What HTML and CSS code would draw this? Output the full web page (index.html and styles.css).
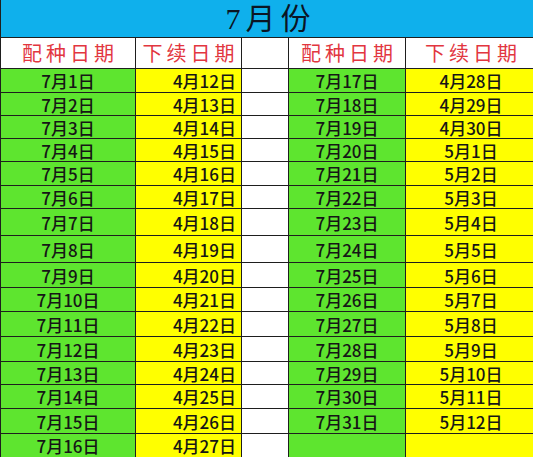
FILE: index.html
```html
<!DOCTYPE html>
<html lang="zh">
<head>
<meta charset="utf-8">
<link rel="stylesheet" href="styles.css">
</head>
<body>
<div class="sheet">
  <div class="title">7月份</div>
  <div class="cell head">配种日期</div>
  <div class="cell head">下续日期</div>
  <div class="cell blank"></div>
  <div class="cell head">配种日期</div>
  <div class="cell head">下续日期</div>

  <div class="cell green">7月1日</div><div class="cell yellow right">4月12日</div><div class="cell blank"></div><div class="cell green">7月17日</div><div class="cell yellow">4月28日</div>
  <div class="cell green">7月2日</div><div class="cell yellow right">4月13日</div><div class="cell blank"></div><div class="cell green">7月18日</div><div class="cell yellow">4月29日</div>
  <div class="cell green">7月3日</div><div class="cell yellow right">4月14日</div><div class="cell blank"></div><div class="cell green">7月19日</div><div class="cell yellow">4月30日</div>
  <div class="cell green">7月4日</div><div class="cell yellow right">4月15日</div><div class="cell blank"></div><div class="cell green">7月20日</div><div class="cell yellow">5月1日</div>
  <div class="cell green">7月5日</div><div class="cell yellow right">4月16日</div><div class="cell blank"></div><div class="cell green">7月21日</div><div class="cell yellow">5月2日</div>
  <div class="cell green">7月6日</div><div class="cell yellow right">4月17日</div><div class="cell blank"></div><div class="cell green">7月22日</div><div class="cell yellow">5月3日</div>
  <div class="cell green">7月7日</div><div class="cell yellow right">4月18日</div><div class="cell blank"></div><div class="cell green">7月23日</div><div class="cell yellow">5月4日</div>
  <div class="cell green">7月8日</div><div class="cell yellow right">4月19日</div><div class="cell blank"></div><div class="cell green">7月24日</div><div class="cell yellow">5月5日</div>
  <div class="cell green">7月9日</div><div class="cell yellow right">4月20日</div><div class="cell blank"></div><div class="cell green">7月25日</div><div class="cell yellow">5月6日</div>
  <div class="cell green">7月10日</div><div class="cell yellow right">4月21日</div><div class="cell blank"></div><div class="cell green">7月26日</div><div class="cell yellow">5月7日</div>
  <div class="cell green">7月11日</div><div class="cell yellow right">4月22日</div><div class="cell blank"></div><div class="cell green">7月27日</div><div class="cell yellow">5月8日</div>
  <div class="cell green">7月12日</div><div class="cell yellow right">4月23日</div><div class="cell blank"></div><div class="cell green">7月28日</div><div class="cell yellow">5月9日</div>
  <div class="cell green">7月13日</div><div class="cell yellow right">4月24日</div><div class="cell blank"></div><div class="cell green">7月29日</div><div class="cell yellow">5月10日</div>
  <div class="cell green">7月14日</div><div class="cell yellow right">4月25日</div><div class="cell blank"></div><div class="cell green">7月30日</div><div class="cell yellow">5月11日</div>
  <div class="cell green">7月15日</div><div class="cell yellow right">4月26日</div><div class="cell blank"></div><div class="cell green">7月31日</div><div class="cell yellow">5月12日</div>
  <div class="cell green">7月16日</div><div class="cell yellow right">4月27日</div><div class="cell blank"></div><div class="cell green"></div><div class="cell yellow"></div>
</div>
</body>
</html>
```
FILE: styles.css
```css
html, body { margin: 0; padding: 0; background: #ffffff; }
body { width: 533px; height: 457px; overflow: hidden; }
.sheet {
  display: grid;
  grid-template-columns: 134px 105px 46px 116px 130px;
  grid-template-rows: 37px 30px 23px 22px 22px 22px 23px 22px 26px 26px 24px 23px 24px 24px 22px 23px 24px 23px;
  gap: 1px;
  padding-left: 1px;
  background: #1e1e1e;
  width: 536px;
  font-family: "Noto Sans CJK SC", sans-serif;
}
.title {
  grid-column: 1 / -1;
  background: #0fb0ec;
  color: #0b1524;
  font-family: "Liberation Serif", "Noto Sans CJK SC", serif;
  font-size: 30px;
  letter-spacing: 5px;
  display: flex;
  align-items: center;
  justify-content: center;
  padding-left: 4px;
  line-height: 1;
}
.cell {
  display: flex;
  align-items: center;
  justify-content: center;
  font-size: 17px;
  font-weight: 500;
  line-height: 1;
  color: #161616;
  white-space: nowrap;
}
.head {
  background: #ffffff;
  color: #e2363f;
  font-size: 20px;
  font-weight: 400;
  letter-spacing: 4px;
  padding-left: 4px;
}
.blank { background: #ffffff; }
.green { background: #5ee52f; }
.yellow { background: #ffff00; }
.right { justify-content: flex-end; padding-right: 5px; }
```
